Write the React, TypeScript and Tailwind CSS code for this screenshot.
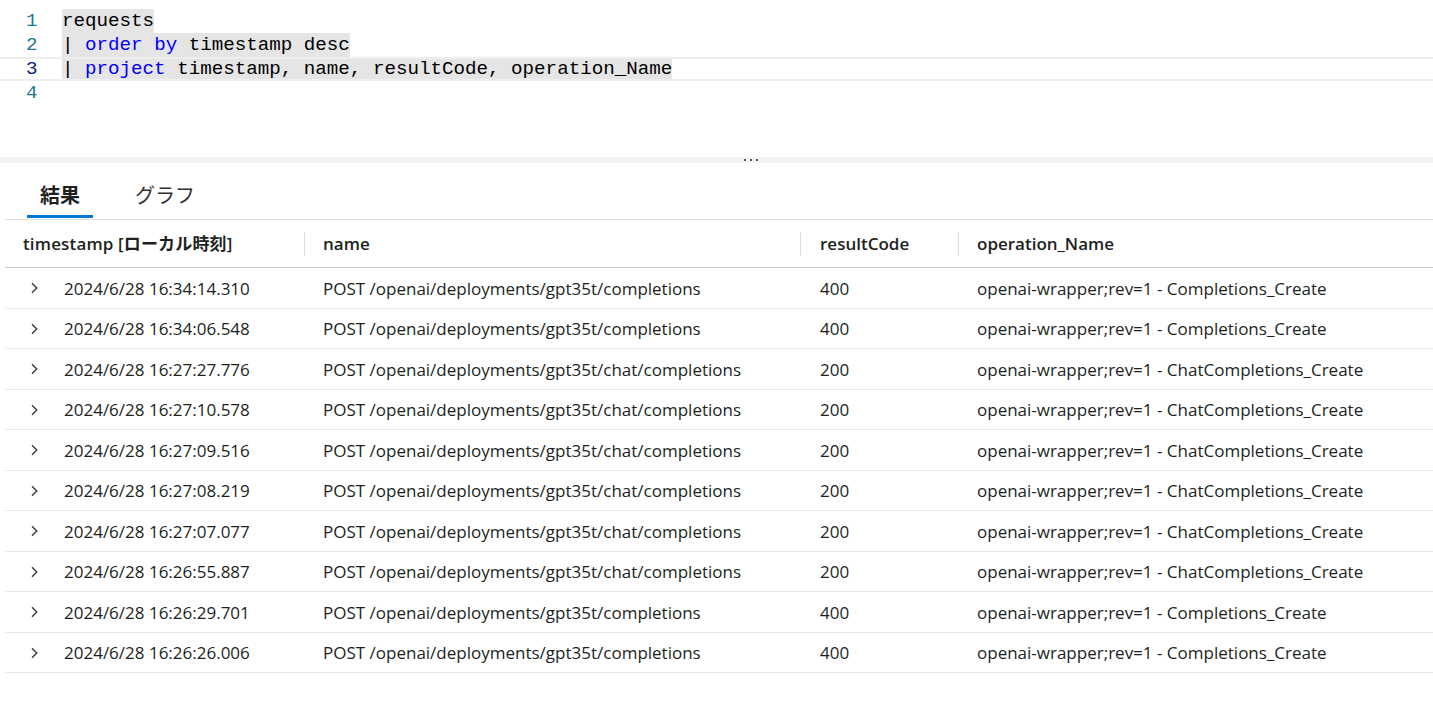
import React from "react";

const rows = [
  ["2024/6/28 16:34:14.310", "POST /openai/deployments/gpt35t/completions", "400", "openai-wrapper;rev=1 - Completions_Create"],
  ["2024/6/28 16:34:06.548", "POST /openai/deployments/gpt35t/completions", "400", "openai-wrapper;rev=1 - Completions_Create"],
  ["2024/6/28 16:27:27.776", "POST /openai/deployments/gpt35t/chat/completions", "200", "openai-wrapper;rev=1 - ChatCompletions_Create"],
  ["2024/6/28 16:27:10.578", "POST /openai/deployments/gpt35t/chat/completions", "200", "openai-wrapper;rev=1 - ChatCompletions_Create"],
  ["2024/6/28 16:27:09.516", "POST /openai/deployments/gpt35t/chat/completions", "200", "openai-wrapper;rev=1 - ChatCompletions_Create"],
  ["2024/6/28 16:27:08.219", "POST /openai/deployments/gpt35t/chat/completions", "200", "openai-wrapper;rev=1 - ChatCompletions_Create"],
  ["2024/6/28 16:27:07.077", "POST /openai/deployments/gpt35t/chat/completions", "200", "openai-wrapper;rev=1 - ChatCompletions_Create"],
  ["2024/6/28 16:26:55.887", "POST /openai/deployments/gpt35t/chat/completions", "200", "openai-wrapper;rev=1 - ChatCompletions_Create"],
  ["2024/6/28 16:26:29.701", "POST /openai/deployments/gpt35t/completions", "400", "openai-wrapper;rev=1 - Completions_Create"],
  ["2024/6/28 16:26:26.006", "POST /openai/deployments/gpt35t/completions", "400", "openai-wrapper;rev=1 - Completions_Create"],
];

const Chevron = () => (
  <svg width="10" height="12" viewBox="0 0 10 12" className="text-[#333]">
    <path d="M3 1.2 L7.8 6 L3 10.8" fill="none" stroke="currentColor" strokeWidth="1.3" />
  </svg>
);

const Kw = ({ children }: { children: React.ReactNode }) => (
  <span className="text-[#0000ff]">{children}</span>
);

const App = () => {
  const mono = { fontFamily: '"Liberation Mono", "DejaVu Sans Mono", monospace' };
  const ui = { fontFamily: '"Open Sans", "Noto Sans CJK JP", sans-serif' };

  return (
    <div className="w-[1433px] h-[727px] bg-white overflow-hidden" style={ui}>
      {/* query editor */}
      <div className="h-[157px] pt-[9px] text-[19.2px] leading-[24px]" style={mono}>
        <div className="flex h-[24px]">
          <div className="w-[62px] pl-[26px] text-[#237893]">1</div>
          <span className="bg-[#e5e5e5] text-black">requests</span>
        </div>
        <div className="flex h-[24px]">
          <div className="w-[62px] pl-[26px] text-[#237893]">2</div>
          <span className="bg-[#e5e5e5] text-black">
            | <Kw>order</Kw> <Kw>by</Kw> timestamp desc
          </span>
        </div>
        <div className="flex h-[24px] border-y-2 border-[#eeeeee]">
          <div className="w-[62px] pl-[26px] text-[#0b216f] leading-[20px]">3</div>
          <span className="bg-[#e5e5e5] text-black leading-[20px]">
            | <Kw>project</Kw> timestamp, name, resultCode, operation_Name
          </span>
        </div>
        <div className="flex h-[24px]">
          <div className="w-[62px] pl-[26px] text-[#237893]">4</div>
        </div>
      </div>

      {/* splitter */}
      <div className="h-[6px] bg-[#f3f3f3] flex justify-center items-center pl-[68px]">
        <div className="flex gap-[4px]">
          <span className="w-[2px] h-[2px] bg-[#555]" />
          <span className="w-[2px] h-[2px] bg-[#555]" />
          <span className="w-[2px] h-[2px] bg-[#555]" />
        </div>
      </div>

      {/* tabs */}
      <div className="ml-[5px] border-b border-[#e0e0e0] h-[57px] flex pl-[22px] text-[20px] leading-[28px]">
        <div className="w-[66px] flex flex-col items-center">
          <div className="mt-[19px] font-bold text-[#1f1f1f]">結果</div>
          <div className="mt-[5px] w-full h-[3px] bg-[#0078d4]" />
        </div>
        <div className="mt-[19px] pl-[42px] text-[#323130]">グラフ</div>
      </div>

      {/* results table */}
      <div className="ml-[5px] text-[17px] text-[#201f1e]">
        <div className="grid grid-cols-[300px_496px_158px_1fr] h-[48px] border-b border-[#c8c8c8] items-center font-semibold">
          <div className="pl-[18px] border-r border-[#dddddd] h-[24px] leading-[24px] tracking-[0.15px]">timestamp [ローカル時刻]</div>
          <div className="pl-[18px] border-r border-[#dddddd] h-[24px] leading-[24px]">name</div>
          <div className="pl-[19px] border-r border-[#dddddd] h-[24px] leading-[24px]">resultCode</div>
          <div className="pl-[18px] h-[24px] leading-[24px]">operation_Name</div>
        </div>
        {rows.map((r, i) => (
          <div
            key={i}
            className="grid grid-cols-[300px_496px_158px_1fr] h-[40.5px] border-b border-[#e8e8e8] items-center pt-[1px]"
          >
            <div className="flex items-center pl-[24px]">
              <Chevron />
              <span className="ml-[25px]">{r[0]}</span>
            </div>
            <div className="pl-[18px]">{r[1]}</div>
            <div className="pl-[19px]">{r[2]}</div>
            <div className="pl-[18px]">{r[3]}</div>
          </div>
        ))}
      </div>
    </div>
  );
};

export default App;
